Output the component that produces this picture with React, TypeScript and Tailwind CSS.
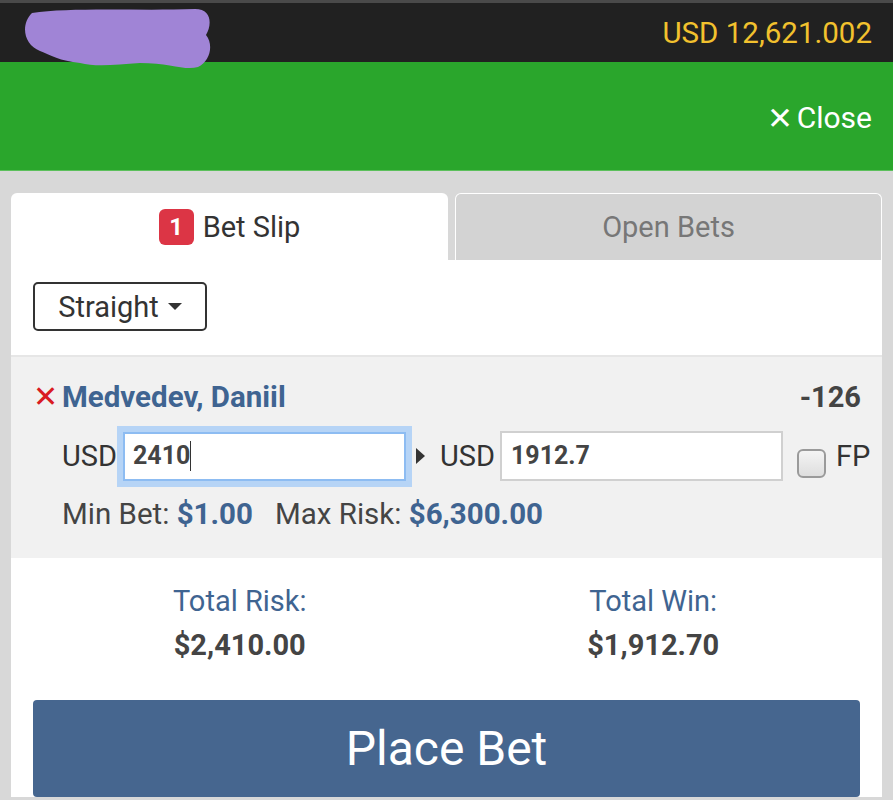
import React from "react";

const Blob = () => (
  <svg width="192" height="66" viewBox="0 0 192 66" className="absolute left-[20px] top-[2px] z-10">
    <path
      d="M12 8 C50 2 120 6 175 4 C192 4 192 20 186 30 C194 40 190 56 178 62 C165 66 150 58 120 58 C95 60 75 62 60 58 C40 56 30 50 20 46 C4 40 0 20 12 8 Z"
      fill="#a084d6"
    />
  </svg>
);

const App = () => {
  return (
    <div
      className="w-[893px] h-[800px] overflow-hidden bg-[#d8d8d8] text-[#333] leading-[34px]"
      style={{ fontFamily: "Roboto, 'Noto Sans', sans-serif" }}
    >
      {/* account bar */}
      <div className="relative h-[62px] bg-[#212121] border-t-[3px] border-[#4a4a4a] flex items-center justify-end pr-[21px]">
        <Blob />
        <span className="text-[#f2c12e] text-[29.5px]">USD 12,621.002</span>
      </div>

      {/* green header */}
      <div className="h-[109px] bg-[#2aa62c] border-b border-[#5cc05c] flex items-center justify-end pr-[21px] pt-[4px]">
        <span className="text-white text-[30px] flex items-center gap-[4px]">
          <span className="text-[31px] leading-none">✕</span>Close
        </span>
      </div>

      <div className="px-[11px] pt-[22px]">
        {/* tabs */}
        <div className="flex gap-[7px] h-[67px]">
          <div className="w-[437px] bg-white rounded-t-[6px] flex items-center justify-center gap-[9px]">
            <span className="w-[35px] h-[36px] rounded-[6px] bg-[#dc3545] text-white text-[24px] font-bold flex items-center justify-center">
              1
            </span>
            <span className="text-[29px] text-[#333]">Bet Slip</span>
          </div>
          <div className="flex-1 bg-[#d3d3d3] border border-white border-b-0 rounded-t-[6px] flex items-center justify-center">
            <span className="text-[29px] text-[#777]">Open Bets</span>
          </div>
        </div>

        <div className="bg-white">
          {/* bet type */}
          <div className="px-[22px] pt-[22px] pb-[24px] border-b-2 border-[#e6e6e6]">
            <button className="h-[49px] w-[174px] border-2 border-[#333] rounded-[5px] flex items-center justify-center gap-[9px] text-[29px] text-[#333]">
              Straight
              <span className="w-0 h-0 border-l-[7px] border-r-[7px] border-t-[7px] border-l-transparent border-r-transparent border-t-[#333]" />
            </button>
          </div>

          {/* selection */}
          <div className="bg-[#f1f1f1] pl-[22px] pr-[21px] pt-[23px] pb-[27px]">
            <div className="flex items-center justify-between h-[34px]">
              <div className="flex items-center gap-[11px]">
                <span className="text-[#d91b22] text-[30px] leading-none w-[18px]">✕</span>
                <span className="text-[#3f6491] text-[29.5px] font-bold">Medvedev, Daniil</span>
              </div>
              <span className="text-[#444] text-[29px] font-bold">-126</span>
            </div>

            <div className="flex items-center mt-[17px] pl-[29px] h-[50px]">
              <span className="shrink-0 text-[29px] text-[#333] w-[55px]">USD</span>
              <div className="shrink-0 ml-[6px] w-[283px] h-[49px] bg-white border-2 border-[#8dbcf2] shadow-[0_0_0_6px_#b6d4f6] flex items-center pl-[8px] text-[25px] font-bold text-[#444]">
                2410<span className="w-px h-[30px] bg-[#333]" />
              </div>
              <span className="shrink-0 ml-[10px] w-0 h-0 border-t-[8px] border-b-[8px] border-l-[9px] border-t-transparent border-b-transparent border-l-[#333]" />
              <span className="shrink-0 ml-[15px] text-[29px] text-[#333] w-[54px]">USD</span>
              <div className="shrink-0 ml-[6px] w-[283px] h-[50px] bg-white border-2 border-[#d0d0d0] flex items-center pl-[9px] text-[25px] font-bold text-[#444]">
                1912.7
              </div>
              <span className="shrink-0 ml-[14px] mt-[14px] w-[29px] h-[29px] rounded-[6px] border-2 border-[#9a9a9a] bg-gradient-to-b from-[#f4f4f4] to-[#dedede]" />
              <span className="shrink-0 ml-[10px] text-[29px] text-[#333]">FP</span>
            </div>

            <div className="mt-[16px] pl-[29px] text-[29.5px] text-[#444]">
              Min Bet: <span className="font-bold text-[#3f6491]">$1.00</span>
              <span className="ml-[22px]">Max Risk: </span>
              <span className="font-bold text-[#3f6491]">$6,300.00</span>
            </div>
          </div>

          {/* totals */}
          <div className="px-[22px] pt-[26px]">
            <div className="grid grid-cols-2 text-center">
              <div>
                <div className="text-[29px] text-[#3f6491]">Total Risk:</div>
                <div className="text-[29px] font-bold text-[#444] mt-[10px]">$2,410.00</div>
              </div>
              <div>
                <div className="text-[29px] text-[#3f6491]">Total Win:</div>
                <div className="text-[29px] font-bold text-[#444] mt-[10px]">$1,912.70</div>
              </div>
            </div>
            <button className="mt-[38px] w-full h-[97px] rounded-[4px] bg-[#46668f] text-white text-[48px] flex items-center justify-center">
              Place Bet
            </button>
          </div>
        </div>
      </div>
    </div>
  );
};

export default App;
